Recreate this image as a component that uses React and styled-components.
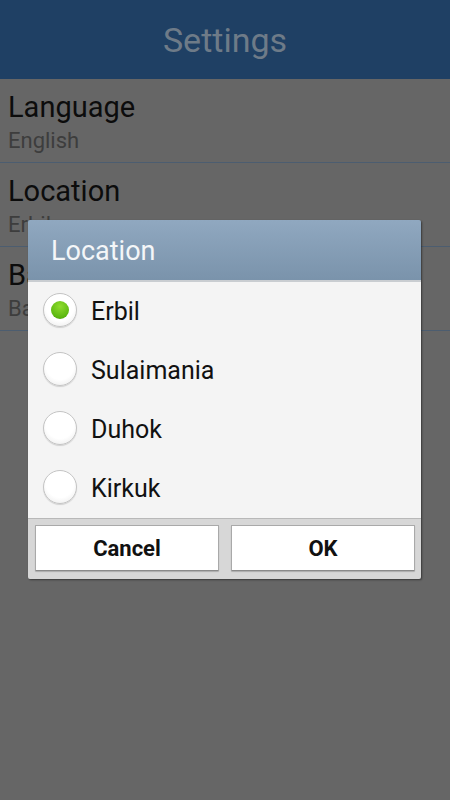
import React, { useState } from 'react'
import styled, { createGlobalStyle } from 'styled-components'

const GlobalStyle = createGlobalStyle`
  html, body {
    margin: 0;
    padding: 0;
    background: #666666;
    font-family: Roboto, "Liberation Sans", sans-serif;
  }
`

const Screen = styled.div`
  position: relative;
  width: 450px;
  height: 800px;
  background: #666666;
  overflow: hidden;
`

const Header = styled.div`
  height: 79px;
  background: #1f4064;
  display: flex;
  align-items: center;
  justify-content: center;
  color: #6e7b88;
  font-size: 34px;
`

const Row = styled.div`
  height: 84px;
  padding: 11px 8px 0;
  box-sizing: border-box;
  border-bottom: 1px solid #4c5d70;
  white-space: nowrap;
  overflow: hidden;
`

const Title = styled.div`
  font-size: 29px;
  line-height: 34px;
  color: #0c0c0c;
`

const Sub = styled.div`
  margin-top: 2px;
  font-size: 22px;
  line-height: 30px;
  color: #3d3d3d;
`

const Dialog = styled.div`
  position: absolute;
  left: 28px;
  top: 220px;
  width: 393px;
  border-radius: 2px;
  overflow: hidden;
  box-shadow: 1px 1px 2px rgba(0, 0, 0, 0.45);
`

const DialogHead = styled.div`
  height: 62px;
  box-sizing: border-box;
  padding: 2px 23px 0;
  background: linear-gradient(#90a8c0, #7a93ab);
  border-bottom: 2px solid #c9cdd1;
  display: flex;
  align-items: center;
  color: #f4f6f8;
  font-size: 27px;
`

const List = styled.div`
  background: #f4f4f4;
  border-bottom: 1px solid #b8b8b8;
`

const Option = styled.label`
  height: 59px;
  display: flex;
  align-items: center;
  padding: 0 15px;
  gap: 14px;
  font-size: 25px;
  color: #111;
  cursor: pointer;
`

const Radio = styled.span`
  width: 34px;
  height: 34px;
  margin-top: -3px;
  border-radius: 50%;
  box-sizing: border-box;
  border: 1px solid #c4c4c4;
  background: radial-gradient(circle at 50% 40%, #ffffff 55%, #e6e6e6 100%);
  box-shadow: 0 1px 1px rgba(0, 0, 0, 0.15);
  display: flex;
  align-items: center;
  justify-content: center;

  &::after {
    content: '';
    display: ${p => (p.$on ? 'block' : 'none')};
    width: 18px;
    height: 18px;
    border-radius: 50%;
    background: radial-gradient(circle at 50% 30%, #8fdc2e, #5cb810 70%, #3f8a08);
  }
`

const Buttons = styled.div`
  background: #d7d7d7;
  display: grid;
  grid-template-columns: 1fr 1fr;
  gap: 12px;
  padding: 6px 6px 8px 7px;
`

const Button = styled.button`
  height: 46px;
  background: #ffffff;
  border: 1px solid #a9a9a9;
  border-bottom-color: #8a8a8a;
  border-radius: 1px;
  box-shadow: 0 1px 1px rgba(0, 0, 0, 0.2);
  font-family: Roboto, "Liberation Sans", sans-serif;
  font-weight: bold;
  font-size: 22px;
  color: #111;
`

const places = ['Erbil', 'Sulaimania', 'Duhok', 'Kirkuk']

export default function App() {
  const [picked, setPicked] = useState('Erbil')

  return (
    <Screen>
      <GlobalStyle />
      <Header>Settings</Header>
      <Row>
        <Title>Language</Title>
        <Sub>English</Sub>
      </Row>
      <Row>
        <Title>Location</Title>
        <Sub>Erbil</Sub>
      </Row>
      <Row>
        <Title>Background</Title>
        <Sub>Background image</Sub>
      </Row>

      <Dialog>
        <DialogHead>Location</DialogHead>
        <List>
          {places.map(p => (
            <Option key={p} onClick={() => setPicked(p)}>
              <Radio $on={picked === p} />
              {p}
            </Option>
          ))}
        </List>
        <Buttons>
          <Button>Cancel</Button>
          <Button>OK</Button>
        </Buttons>
      </Dialog>
    </Screen>
  )
}
